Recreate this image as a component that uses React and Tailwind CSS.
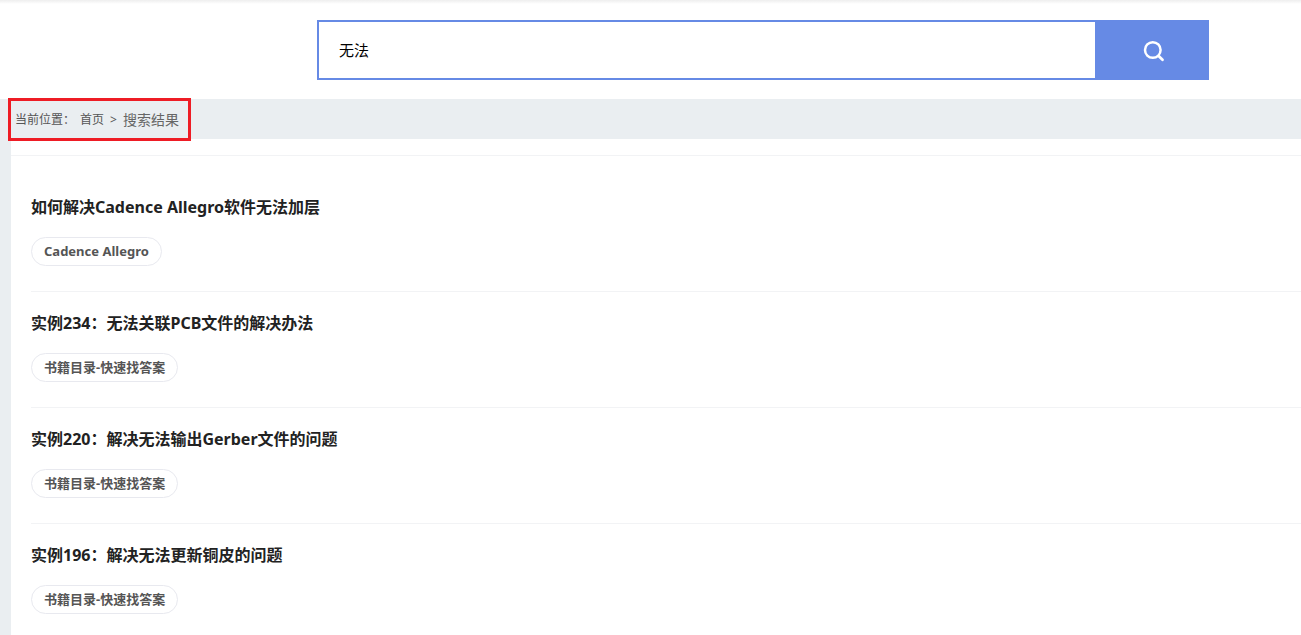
import React, { useState } from "react";

const results = [
  { id: 1, title: "如何解决Cadence Allegro软件无法加层", tag: "Cadence Allegro" },
  { id: 2, title: "实例234：无法关联PCB文件的解决办法", tag: "书籍目录-快速找答案" },
  { id: 3, title: "实例220：解决无法输出Gerber文件的问题", tag: "书籍目录-快速找答案" },
  { id: 4, title: "实例196：解决无法更新铜皮的问题", tag: "书籍目录-快速找答案" },
];

function SearchBar() {
  const [keyword, setKeyword] = useState("无法");

  return (
    <form
      className="ml-[317px] mr-[92px] flex h-[60px]"
      onSubmit={(e) => e.preventDefault()}
    >
      <input
        type="text"
        aria-label="搜索"
        value={keyword}
        onChange={(e) => setKeyword(e.target.value)}
        className="min-w-0 flex-1 border-2 border-r-0 border-[#668ae5] bg-white px-5 text-[15px] text-black outline-none"
      />
      <button
        type="submit"
        aria-label="搜索"
        className="flex w-[114px] items-center justify-center bg-[#668ae5] pl-1 text-white"
      >
        <svg
          className="h-6 w-6"
          viewBox="0 0 24 24"
          fill="none"
          stroke="currentColor"
          strokeWidth="2.5"
          strokeLinecap="round"
        >
          <circle cx="10.8" cy="12" r="7.8" />
          <path d="M16.9 18.3l3.6 3.4" strokeWidth="2.8" />
        </svg>
      </button>
    </form>
  );
}

function Breadcrumb() {
  return (
    <nav className="relative flex h-10 items-center bg-[#eaeef1] pt-px pl-[15px] text-xs text-[#555]">
      <span className="w-[65px]">当前位置：</span>
      <a href="#home">首页</a>
      <span className="w-[19px] text-center">&gt;</span>
      <a href="#results" className="text-sm text-[#666]">
        搜索结果
      </a>
      {/* Highlight frame around the current path */}
      <div className="pointer-events-none absolute -top-px left-2 h-[43px] w-[183px] border-3 border-[#ee1c25]" />
    </nav>
  );
}

function ResultItem({ title, tag }) {
  return (
    <li className="border-b border-[#f2f3f5] pt-[19px] pb-[25px]">
      <h2 className="text-base leading-6 font-bold text-[#222]">
        <a href="#detail">{title}</a>
      </h2>
      <div className="mt-[18px] flex">
        <a
          href="#tag"
          className="flex h-[29px] items-center rounded-full border border-[#e8e9ef] px-3 text-[13px] font-bold text-[#555]"
        >
          {tag}
        </a>
      </div>
    </li>
  );
}

export default function App() {
  return (
    <div className="flex min-h-screen flex-col bg-[#eaeef1] font-['Noto_Sans','Noto_Sans_CJK_SC',sans-serif]">
      <header className="bg-white">
        <div className="h-1 bg-linear-to-b from-[#eeeeee] to-white" />
        <div className="pt-4 pb-[19px]">
          <SearchBar />
        </div>
      </header>
      <Breadcrumb />
      <main className="ml-[11px] flex-1 bg-white pt-4">
        <ul className="border-t border-[#f2f3f5] pt-5 pl-5">
          {results.map((item) => (
            <ResultItem key={item.id} title={item.title} tag={item.tag} />
          ))}
        </ul>
      </main>
    </div>
  );
}
